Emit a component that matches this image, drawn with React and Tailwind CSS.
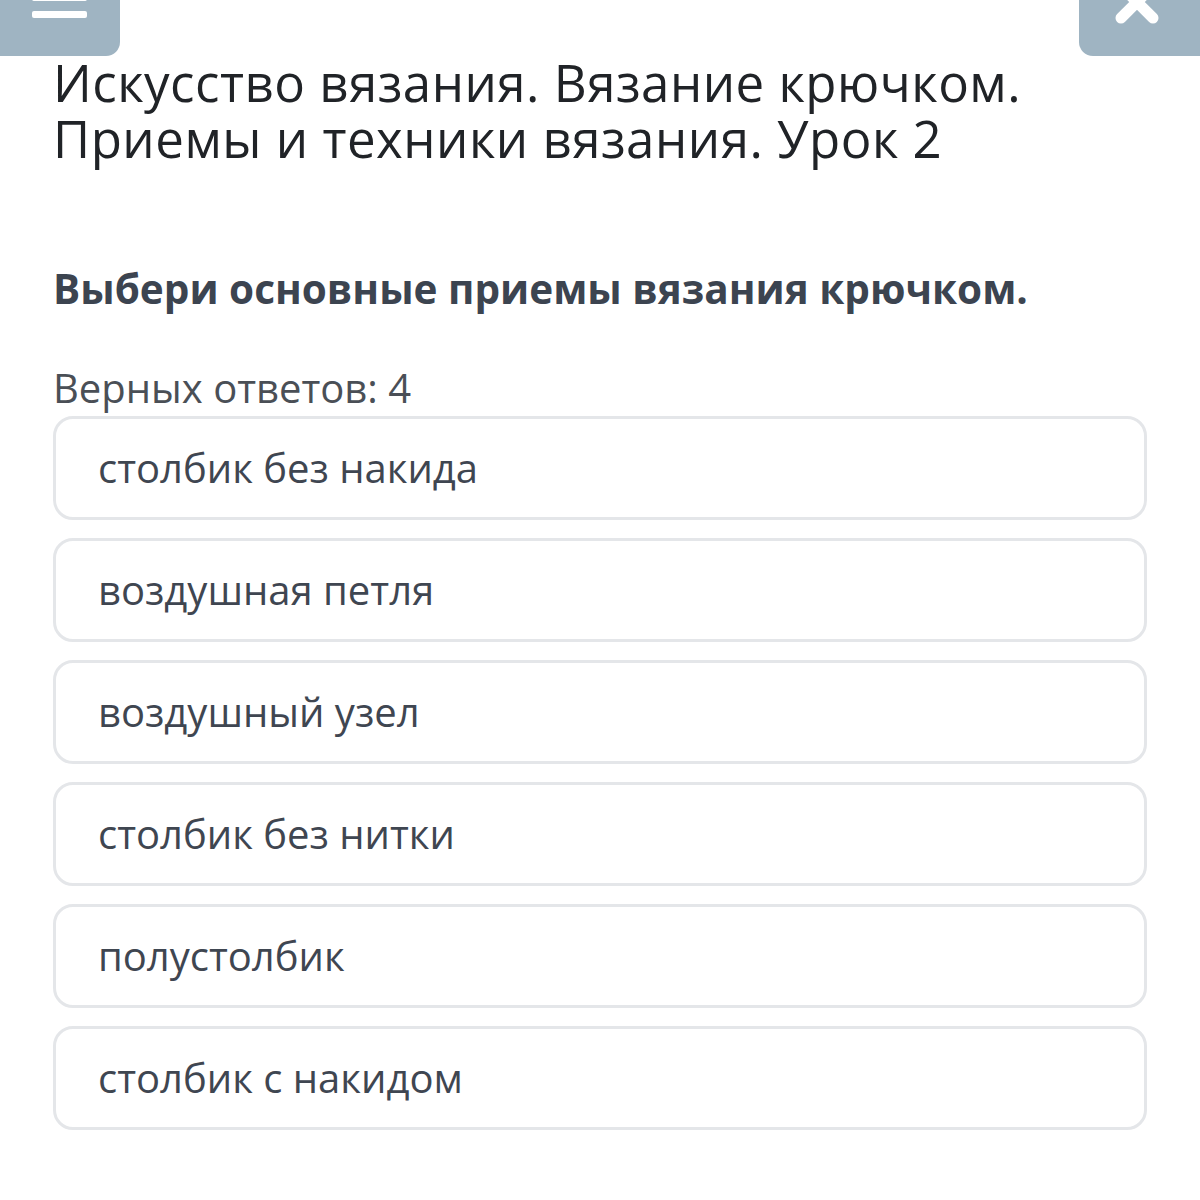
const options = [
  "столбик без накида",
  "воздушная петля",
  "воздушный узел",
  "столбик без нитки",
  "полустолбик",
  "столбик с накидом",
];

export default function App() {
  return (
    <div className="relative min-h-[1200px] w-[1200px] bg-white font-['Open_Sans',sans-serif]">
      <div className="flex h-[56px] justify-between">
        <button className="relative h-[56px] w-[120px] overflow-hidden rounded-br-[14px] bg-[#9fb4c2]">
          <span className="absolute left-[32px] top-[-6px] h-[7px] w-[55px] rounded-[2px] bg-white" />
          <span className="absolute left-[32px] top-[11px] h-[7px] w-[55px] rounded-[2px] bg-white" />
        </button>
        <button className="relative h-[56px] w-[121px] overflow-hidden rounded-bl-[14px] bg-[#9fb4c2]">
          <svg className="absolute left-[28px] top-[-28px]" width="60" height="60" viewBox="0 0 60 60">
            <path d="M14 14 L46 46 M46 14 L14 46" stroke="white" strokeWidth="11" strokeLinecap="round" />
          </svg>
        </button>
      </div>
      <div className="px-[53px]">
        <h1 className="mt-[-2px] text-[51px] leading-[56px] tracking-[0.5px] text-[#202327]">
          Искусство вязания. Вязание крючком.
          <br />
          Приемы и техники вязания. Урок 2
        </h1>
        <p className="mt-[98px] text-[40.5px] font-bold leading-[50px] text-[#3c4450]">
          Выбери основные приемы вязания крючком.
        </p>
        <p className="mt-[49px] text-[40px] leading-[50px] text-[#4a4f56]">Верных ответов: 4</p>
        <div className="mt-[3px] flex flex-col gap-[18px]">
          {options.map((o) => (
            <div
              key={o}
              className="flex h-[104px] items-center rounded-[20px] border-[3px] border-[#e4e6e9] px-[42px] text-[40px] text-[#3f4651]"
            >
              {o}
            </div>
          ))}
        </div>
      </div>
    </div>
  );
}
